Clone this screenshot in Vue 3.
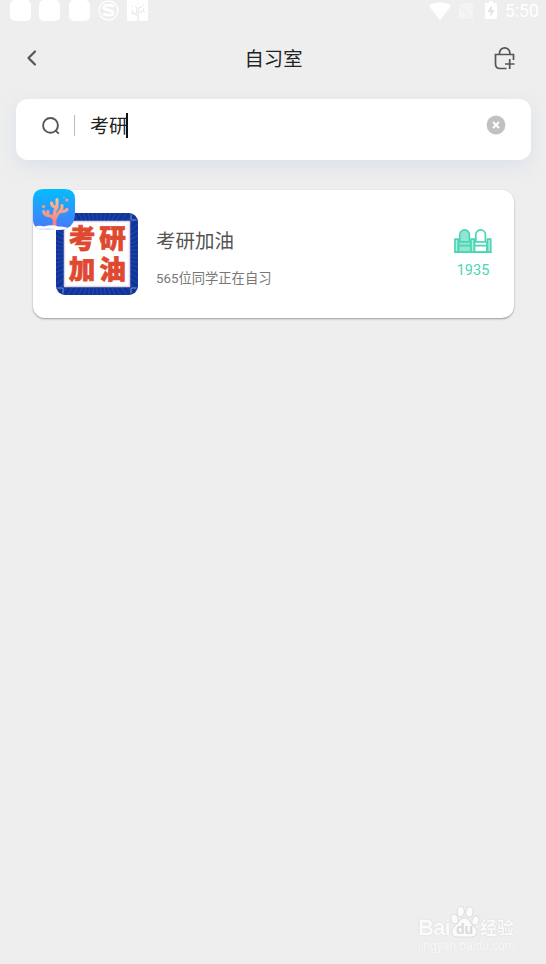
<script setup>
import { ref } from 'vue'

const keyword = ref('考研')
const rooms = [{ name: '考研加油', online: 565, seats: 1935 }]
const rays = Array.from({ length: 60 }, (_, i) => {
  const a = (i * Math.PI) / 30
  return {
    x1: 41 + 34 * Math.cos(a),
    y1: 41 + 34 * Math.sin(a),
    x2: 41 + 60 * Math.cos(a),
    y2: 41 + 60 * Math.sin(a)
  }
})
</script>

<template>
  <div class="screen">
    <div class="status">
      <div class="notices">
        <span v-for="n in 3" :key="n" class="notice"></span>
        <svg class="notice-icon" viewBox="0 0 21 21">
          <circle cx="10.5" cy="10.5" r="9.5" fill="none" stroke="#fff" stroke-width="1.3" />
          <path d="M16 6.3C13 4.7 5.5 4.5 5.7 7.7c.2 3 9.3 1.8 9.3 5.2 0 3-6.7 2.6-9.9 1" fill="none" stroke="#fff" stroke-width="2.7" />
        </svg>
        <svg class="notice-icon" viewBox="0 0 21 21">
          <path d="M0 0h21v21H0z" fill="#fff" />
          <path d="M11 21v-7M11 16l-5-3-1-3M11 14l1-6 3-2M12 13l4-2 1-3M9 14l1-6-2-2M4 13l3 1" fill="none" stroke="#ebebeb" stroke-width="1.3" />
          <path d="M5 6h1M11 4h1M16 5h1M17 12h1" stroke="#ebebeb" stroke-width="1.3" />
        </svg>
      </div>
      <div class="system">
        <svg class="wifi" viewBox="0 0 22 18"><path d="M0 4C6-1 16-1 22 4L11 18z" fill="#fff" /></svg>
        <svg class="sim" viewBox="0 0 16 18">
          <path d="M6 1h8q1 0 1 1v14L3 3zM1 5l12 12H2q-1 0-1-1z" fill="#f4f4f4" />
          <path d="M1 2l14 15" stroke="#f4f4f4" stroke-width="1.3" />
        </svg>
        <svg class="battery" viewBox="0 0 12 18">
          <path d="M4 0h4v2h3q1 0 1 1v14q0 1-1 1H1q-1 0-1-1V3q0-1 1-1h3z" fill="#fff" />
          <path d="M7 4L2.5 11H5.5V16L9.5 9H7z" fill="#e3e3e3" />
        </svg>
        <span class="clock">5:50</span>
      </div>
    </div>

    <header class="header">
      <svg class="back" viewBox="0 0 12 18"><path d="M9 2.5L2.5 9l6.5 6.5" fill="none" stroke="#555" stroke-width="2.2" stroke-linecap="round" stroke-linejoin="round" /></svg>
      <h1 class="title">自习室</h1>
      <svg class="create" viewBox="0 0 24 26">
        <path d="M20.500 15V9.500H2.500V19q0 4.500 4.500 4.500h6.500M6.500 9V8a5.200 5.200 0 0 1 10.400 0v1M16.700 14v10M12 19h9.500" fill="none" stroke="#555" stroke-width="1.700" />
      </svg>
    </header>

    <div class="search">
      <svg class="lens" viewBox="0 0 20 20">
        <circle cx="9.500" cy="10.400" r="7.400" fill="none" stroke="#555" stroke-width="1.900" />
        <path d="M14.500 15.600l3.300 3" stroke="#555" stroke-width="1.900" />
      </svg>
      <span class="divider"></span>
      <span class="keyword">{{ keyword }}</span>
      <span class="caret"></span>
      <svg class="clear" viewBox="0 0 20 20" @click="keyword = ''">
        <circle cx="10" cy="10" r="9.400" fill="#c1c1c1" />
        <path d="M7 7l6 6M13 7l-6 6" stroke="#fff" stroke-width="1.900" />
      </svg>
    </div>

    <main class="rooms">
      <article v-for="room in rooms" :key="room.name" class="card">
        <svg class="badge" viewBox="0 0 42 42">
          <defs>
            <linearGradient id="sea" x1="0" y1="0" x2="0" y2="1">
              <stop offset="0" stop-color="#04bdff" />
              <stop offset="1" stop-color="#4a76fb" />
            </linearGradient>
            <linearGradient id="coral" gradientUnits="userSpaceOnUse" x1="0" y1="9" x2="0" y2="37">
              <stop offset="0" stop-color="#ffc08e" />
              <stop offset="1" stop-color="#fa7a80" />
            </linearGradient>
            <clipPath id="badgeClip"><path d="M11 0H32Q42 0 42 10V24Q42 41 25 41H12Q0 41 0 30V11Q0 0 11 0z" /></clipPath>
          </defs>
          <g clip-path="url(#badgeClip)">
            <path d="M0 0h42v42H0z" fill="url(#sea)" />
            <path d="M21.500 37V27" fill="none" stroke="#fa7f80" stroke-width="3.800" />
            <path d="M21.500 30Q19 26.500 14.500 26.500Q11.500 26 10.700 22.500M14.500 26.500L15 22.500M21 28Q21 22 24 18.500V10.500M24 18.500Q19 18 18.500 14M22 30Q24 25 27 22Q29.500 20 29 16.500M27 22.500Q32 23 34 20.500" fill="none" stroke="url(#coral)" stroke-width="3.100" stroke-linecap="round" stroke-linejoin="round" />
            <g fill="#ff9f88"><circle cx="10.500" cy="17.500" r="1.500" /><circle cx="31" cy="8.500" r=".8" /><circle cx="33.800" cy="11" r="1.600" /></g>
            <path d="M0 38.500Q5 35.500 11 37.500Q19 35 25 37.500Q32 37 42 41V42H0z" fill="#fff" />
            <path d="M3 41Q12 37.500 22 40L18 42z" fill="#dce5ff" />
          </g>
        </svg>
        <svg class="cover" viewBox="0 0 82 82">
          <defs><clipPath id="coverClip"><rect width="82" height="82" rx="9" /></clipPath></defs>
          <g clip-path="url(#coverClip)">
            <path d="M0 0h82v82H0z" fill="#10349b" />
            <line v-for="(r, i) in rays" :key="i" :x1="r.x1" :y1="r.y1" :x2="r.x2" :y2="r.y2" stroke="#3b63b0" stroke-width=".5" />
            <path d="M75 1.500V7h5.500M75 80.500V75h5.500M7 80.500V75H1.500" fill="none" stroke="#8fa9d8" stroke-width=".8" />
          </g>
          <rect x="8.500" y="8.500" width="65" height="65" fill="#fff" stroke="#e3d5e2" stroke-width="1.500" />
          <g class="cover-text">
            <text x="12.800" y="35.300">考</text><text x="43.300" y="35.300">研</text>
            <text x="12.800" y="66.300">加</text><text x="43.300" y="66.300">油</text>
          </g>
        </svg>
        <div class="info">
          <h2 class="name">{{ room.name }}</h2>
          <p class="online">{{ room.online }}位同学正在自习</p>
        </div>
        <div class="seats">
          <svg class="chairs" viewBox="0 0 38 25">
            <g stroke="#4ad6b5" stroke-width="1.700">
              <path d="M5.800 13V5.700a4.700 4.700 0 0 1 9.600 0V13z" fill="#91e5d1" />
              <path d="M21.800 13V5.700a4.700 4.700 0 0 1 9.600 0V13z" fill="#fff" />
              <path d="M4.500 13h12.500v10H4.500z" fill="#91e5d1" />
              <path d="M20.500 13h12.500v10h-12.500z" fill="#fff" />
              <path d="M1 10.200h3.200v13H1zM17 10.200h3.200v13H17zM33.500 10.200h3.200v13h-3.200z" fill="#b5eee0" />
              <path d="M4 16.700h13M20 16.700h13M0 23.200h37.500" fill="none" />
            </g>
          </svg>
          <span class="count">{{ room.seats }}</span>
        </div>
      </article>
    </main>

    <footer class="watermark">
      <div class="brand">
        <span class="bai">Bai</span>
        <svg class="paw" viewBox="0 0 30 34">
          <g fill="#fbfbfb" stroke="#dcdcdc" stroke-width="1">
            <ellipse cx="4.500" cy="14" rx="3.500" ry="4.800" transform="rotate(-15 4.500 14)" />
            <ellipse cx="10.700" cy="6.500" rx="3.600" ry="5.200" />
            <ellipse cx="19.500" cy="7" rx="3.600" ry="5.200" transform="rotate(10 19.500 7)" />
            <ellipse cx="25.500" cy="15.500" rx="3.500" ry="4.600" transform="rotate(15 25.500 15.500)" />
            <path d="M14.500 13C10 13 9 18 5 21C0 25 1 32 7 32H22C29 31 28 24 23 21C20 18 19 13 14.500 13z" />
          </g>
          <text class="du" x="14.500" y="29">du</text>
        </svg>
        <span class="jingyan">经验</span>
      </div>
      <span class="site">jingyan.baidu.com</span>
    </footer>
  </div>
</template>

<style>
body {
  background: #eee;
}
</style>

<style scoped>
.screen {
  box-sizing: border-box;
  display: flex;
  flex-direction: column;
  width: 546px;
  height: 964px;
  overflow: hidden;
  background: #eee;
  font-family: Roboto, "Noto Sans CJK SC", sans-serif;
}
svg {
  display: block;
  flex: none;
}
.status {
  display: flex;
  justify-content: space-between;
  height: 24px;
  padding: 0 7px 0 10px;
}
.notices {
  display: flex;
  gap: 8.3px;
}
.notice {
  width: 21px;
  height: 21px;
  border-radius: 5px;
  background: #fff;
}
.notice-icon {
  width: 21px;
  height: 21px;
}
.system {
  display: flex;
  align-items: center;
  height: 22px;
}
.wifi {
  width: 22px;
  height: 18px;
  margin-right: 7px;
}
.sim {
  width: 16px;
  height: 18px;
  margin-right: 11px;
}
.battery {
  width: 12px;
  height: 18px;
  margin: 0 8px 2px 0;
}
.clock {
  width: 34px;
  color: #fff;
  font-size: 17.5px;
  line-height: 22px;
  white-space: nowrap;
}
.header {
  display: flex;
  align-items: center;
  justify-content: space-between;
  height: 68px;
  padding: 0 29px 0 26px;
}
.back {
  width: 12px;
  height: 18px;
  margin-right: 16px;
}
.title {
  margin: 0;
  padding-top: 3px;
  color: #222;
  font-size: 19.3px;
  font-weight: 400;
  line-height: 28px;
}
.create {
  width: 24px;
  height: 26px;
}
.search {
  box-sizing: border-box;
  display: flex;
  align-items: center;
  width: 515px;
  height: 61.5px;
  margin: 6.5px 0 0 16px;
  padding: 0 25px 8px;
  border-radius: 12px;
  background: #fff;
  box-shadow: 0 6px 18px rgba(190, 205, 230, 0.4);
}
.lens {
  width: 20px;
  height: 20px;
}
.divider {
  width: 1px;
  height: 21px;
  margin: 0 15px 0 13px;
  background: #bbb;
}
.keyword {
  padding-top: 3px;
  color: #222;
  font-size: 19px;
  line-height: 28px;
}
.caret {
  width: 2px;
  height: 25px;
  margin-left: -2px;
  background: #111;
}
.clear {
  width: 20px;
  height: 20px;
  margin-left: auto;
}
.rooms {
  padding: 30px 32px 0 33px;
}
.card {
  position: relative;
  box-sizing: border-box;
  display: flex;
  align-items: center;
  height: 128px;
  padding: 0 22px 0 23px;
  border-radius: 12px;
  background: #fff;
  box-shadow: 0 1px 2px rgba(0, 0, 0, 0.36);
}
.badge {
  position: absolute;
  top: -1px;
  left: 0;
  width: 42px;
  height: 42px;
}
.cover {
  width: 82px;
  height: 82px;
}
.cover-text {
  fill: #df4930;
  font-family: "Liberation Sans", "Noto Sans CJK SC", sans-serif;
  font-size: 26.6px;
  font-weight: 900;
  stroke: #df4930;
  stroke-width: 0.7px;
}
.info {
  flex: 1;
  padding: 8px 0 0 18px;
}
.name {
  margin: 0;
  color: #555;
  font-size: 19.5px;
  font-weight: 400;
  line-height: 28px;
}
.online {
  margin: 13px 0 0;
  color: #777;
  font-size: 13.3px;
  line-height: 20px;
}
.seats {
  display: flex;
  flex-direction: column;
  align-items: center;
  width: 38px;
  padding-top: 2px;
}
.chairs {
  width: 38px;
  height: 25px;
}
.count {
  margin-top: 7px;
  color: #4ad6b5;
  font-size: 14.5px;
  line-height: 20px;
}
.watermark {
  display: flex;
  flex-direction: column;
  align-self: flex-end;
  width: 98px;
  margin: auto 30px 11px 0;
  color: #fbfbfb;
  text-shadow: 0 0 1px #c4c4c4;
}
.brand {
  display: flex;
  align-items: flex-end;
  height: 34px;
}
.bai {
  width: 32px;
  font-family: "Liberation Sans", sans-serif;
  font-size: 22px;
  font-weight: 700;
  line-height: 22px;
  letter-spacing: -0.8px;
}
.paw {
  width: 30px;
  height: 34px;
}
.du {
  fill: #d8d8d8;
  font-family: "Liberation Sans", sans-serif;
  font-size: 14px;
  font-weight: 700;
  text-anchor: middle;
  text-shadow: none;
}
.jingyan {
  font-size: 17px;
  font-weight: 700;
  line-height: 22px;
  white-space: nowrap;
}
.site {
  color: #fafafa;
  font-family: "Liberation Sans", sans-serif;
  font-size: 12px;
  line-height: 14px;
  text-shadow: 0 0 1px #dcdcdc;
  white-space: nowrap;
}
</style>
